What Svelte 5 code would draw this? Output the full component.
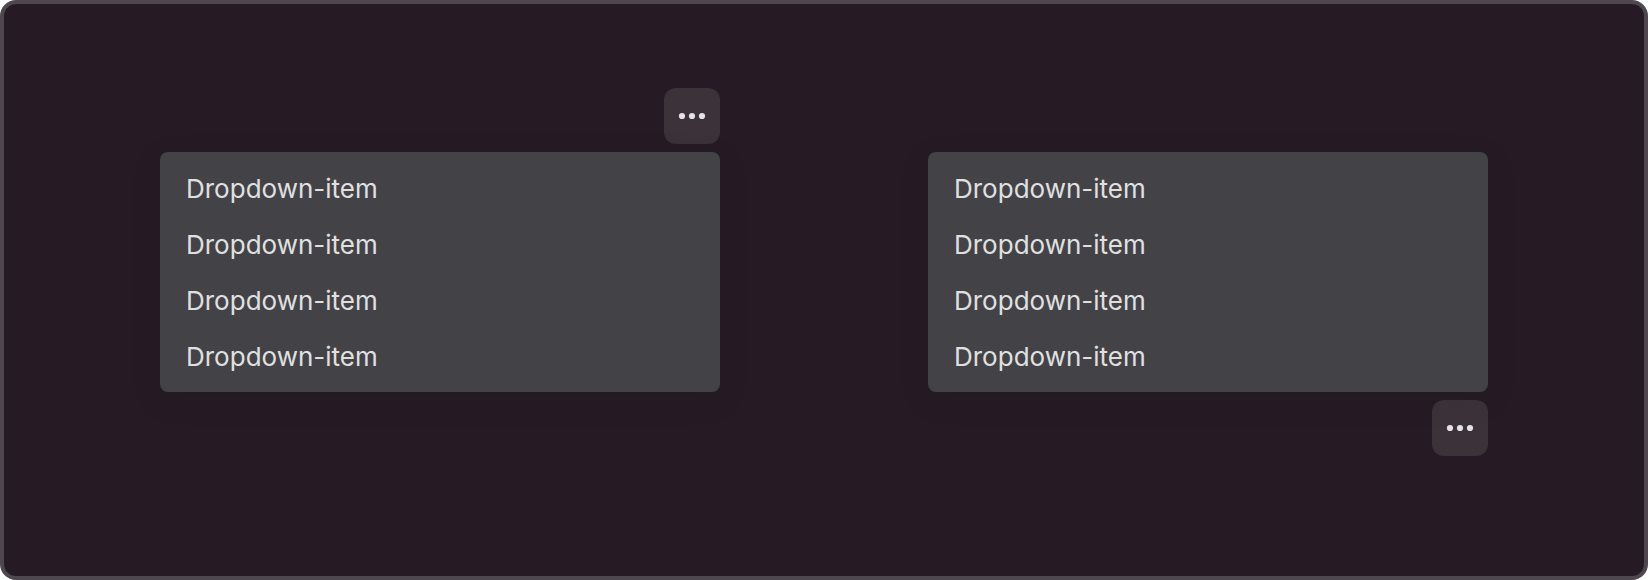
<script>
  const items = ['Dropdown-item', 'Dropdown-item', 'Dropdown-item', 'Dropdown-item'];
</script>

{#snippet trigger()}
  <button class="trigger" aria-label="More">
    <svg width="28" height="8" viewBox="0 0 28 8">
      <circle cx="4" cy="4" r="3.1" /><circle cx="14" cy="4" r="3.1" /><circle cx="24" cy="4" r="3.1" />
    </svg>
  </button>
{/snippet}

{#snippet menu()}
  <ul class="menu">
    {#each items as item}
      <li>{item}</li>
    {/each}
  </ul>
{/snippet}

<main>
  <section class="below">{@render trigger()}{@render menu()}</section>
  <section class="above">{@render menu()}{@render trigger()}</section>
</main>

<style>
  :global(body) { margin: 0; background: #fff; }
  main {
    box-sizing: border-box;
    width: 1648px;
    height: 580px;
    padding: 84px 156px 0;
    display: flex;
    justify-content: space-between;
    border: 4px solid #4f474f;
    border-radius: 16px;
    background: #261b24;
    font-family: Inter, sans-serif;
  }
  section { width: 560px; display: flex; flex-direction: column; align-items: flex-end; gap: 8px; }
  .above { padding-top: 64px; }
  .trigger {
    width: 56px; height: 56px; padding: 0; border: 0; border-radius: 12px;
    background: rgba(255, 255, 255, .1); display: grid; place-items: center;
  }
  svg { display: block; fill: #e5e1e5; }
  .menu {
    box-sizing: border-box; width: 100%; height: 240px; margin: 0; padding: 9px 0 7px;
    list-style: none; border-radius: 8px; background: #434247;
    box-shadow: 0 8px 24px rgba(26, 26, 32, .3);
  }
  li { height: 56px; padding: 0 26px; line-height: 56px; font-size: 26px; font-weight: 400; color: #e0e0e0; }
</style>
